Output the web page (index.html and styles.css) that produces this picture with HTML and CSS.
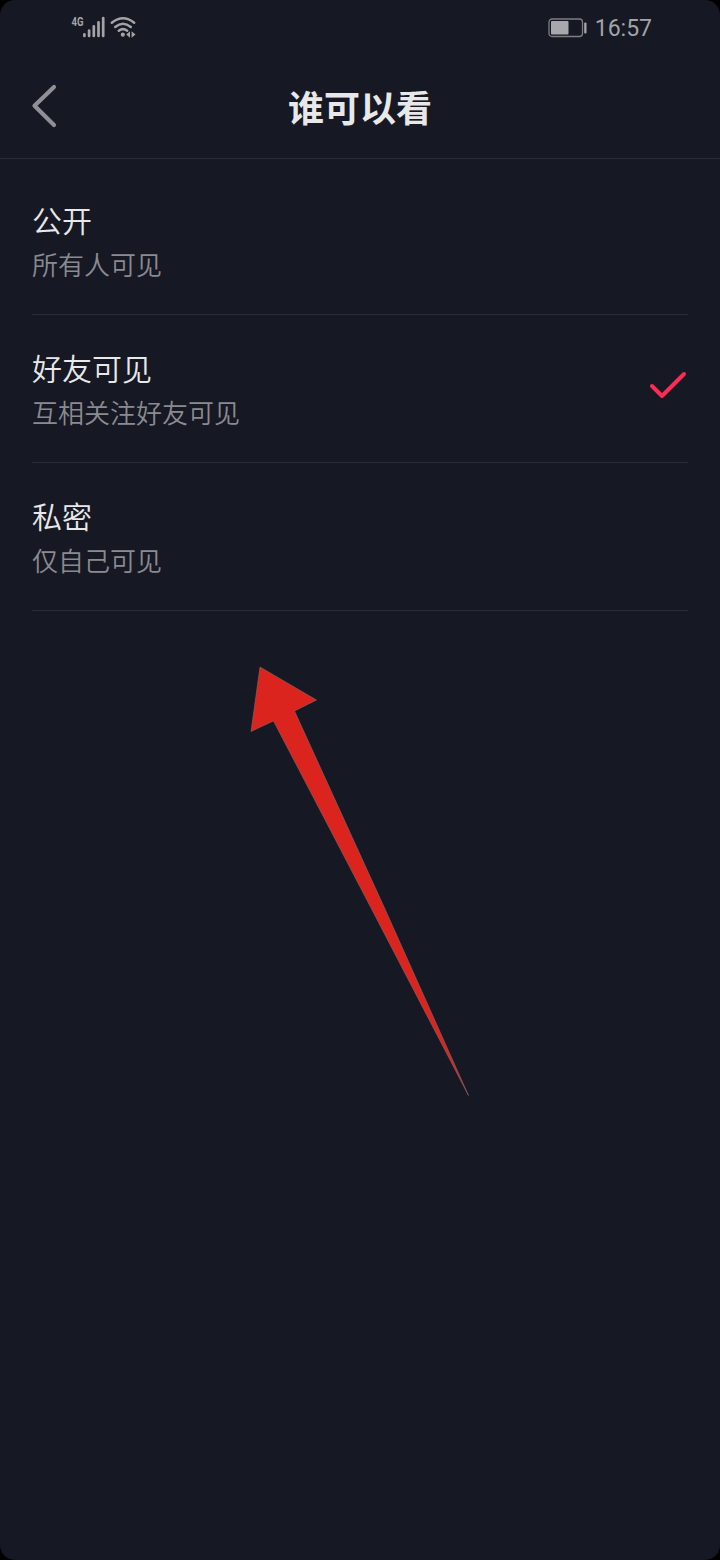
FILE: index.html
```html
<!DOCTYPE html>
<html lang="zh-CN">
<head>
<meta charset="utf-8">
<title>谁可以看</title>
<link rel="stylesheet" href="styles.css">
</head>
<body>
<div class="screen">
  <div class="status">
    <div class="signals">
      <svg width="68" height="28" viewBox="70 12 68 28" fill="none" stroke="#a3a4a8">
        <text class="network" x="71.5" y="26" textLength="12" lengthAdjust="spacingAndGlyphs">4G</text>
        <g stroke-width="2.7" stroke-linecap="round"><path d="M84.4 34.4v1.5M89.1 30.6v5.3M93.8 26.4v9.5M98.5 22.3v13.6M103.2 18v17.9"/></g>
        <g stroke-width="2.5" stroke-linecap="round"><path d="M111.8 22.8q11.2-9 22.4 0M115.2 27q7.8-6.4 15.6 0M118.8 30.8q4.2-3.3 8.4 0"/></g>
        <g fill="#a3a4a8" stroke="none"><circle cx="122.8" cy="34.7" r="2.1"/><path d="M130 31.2v6.6l-3.8-3.3zM131.6 31.2v6.6l3.9-3.3z"/></g>
      </svg>
    </div>
    <div class="clock">
      <svg width="40" height="20" viewBox="0 0 40 20" fill="none">
        <rect x="1" y="1" width="33.5" height="17.5" rx="3" stroke="#7d7e84" stroke-width="1.3"/>
        <rect x="3" y="3" width="17.5" height="13.5" rx="1" fill="#a7a8ac"/>
        <rect x="36.2" y="4.5" width="2.3" height="11" rx="1" fill="#a7a8ac"/>
      </svg>
      <span class="time">16:57</span>
    </div>
  </div>
  <header class="header">
    <svg class="back" width="32" height="48" viewBox="28 82 32 48" fill="none" stroke="#8f9095" stroke-width="4.2" stroke-linecap="round" stroke-linejoin="round"><path d="M54 87L34.5 105.8 54 125"/></svg>
    <h1 class="title">谁可以看</h1>
  </header>
  <main class="options">
    <div class="option"><div><div class="name">公开</div><div class="hint">所有人可见</div></div></div>
    <div class="option"><div><div class="name">好友可见</div><div class="hint">互相关注好友可见</div></div>
      <svg class="check" width="40" height="30" viewBox="648 370 40 30" fill="none" stroke="#fe2c55" stroke-width="4" stroke-linecap="round" stroke-linejoin="round"><path d="M652 386L662 396 684 374"/></svg>
    </div>
    <div class="option"><div><div class="name">私密</div><div class="hint">仅自己可见</div></div></div>
  </main>
  <svg class="arrow" width="220" height="432" viewBox="250 665 220 432"><path d="M260 667L316.5 700 294.5 711 384.5 908 468.5 1095.5 369.5 905 273.5 721 251 731.5z" fill="#dc241f" stroke="#86686a" stroke-width=".6"/></svg>
</div>
</body>
</html>
```
FILE: styles.css
```css
html { background: #000; }
body { margin: 0; font-family: "Noto Sans CJK SC", sans-serif; }
.screen {
  position: relative;
  height: 1560px;
  border-radius: 15px;
  background: #161823;
  overflow: hidden;
}
.status {
  display: flex;
  justify-content: space-between;
  height: 56px;
  padding: 0 68px 0 70px;
  box-sizing: border-box;
}
.signals { padding-top: 12px; }
.network { font: 700 12px Roboto, sans-serif; fill: #a3a4a8; stroke: none; }
.clock { display: flex; align-items: center; gap: 7px; }
.time { padding-top: 2px; font: 23px/28px Roboto, sans-serif; color: #a3a4a8; }
.header {
  display: grid;
  grid-template-columns: 60px 1fr 60px;
  align-items: center;
  height: 103px;
  padding-bottom: 2px;
  box-sizing: border-box;
  border-bottom: 1px solid #2a2c36;
}
.back { margin-left: 28px; }
.title {
  margin: 0;
  text-align: center;
  font-size: 36px;
  line-height: 52px;
  font-weight: 700;
  color: #e8e8e9;
}
.options { padding: 8px 32px 0; }
.option {
  display: flex;
  align-items: center;
  justify-content: space-between;
  height: 148px;
  box-sizing: border-box;
  border-bottom: 1px solid #2a2c36;
}
.check { margin-bottom: 8px; }
.name { font-size: 30px; line-height: 44px; color: #e8e8e9; }
.hint { font-size: 26px; line-height: 44px; padding-top: 1px; margin-bottom: -1px; color: #8a8b91; }
.name, .hint { font-weight: 350; }
.arrow { position: absolute; left: 250px; top: 665px; }
```
